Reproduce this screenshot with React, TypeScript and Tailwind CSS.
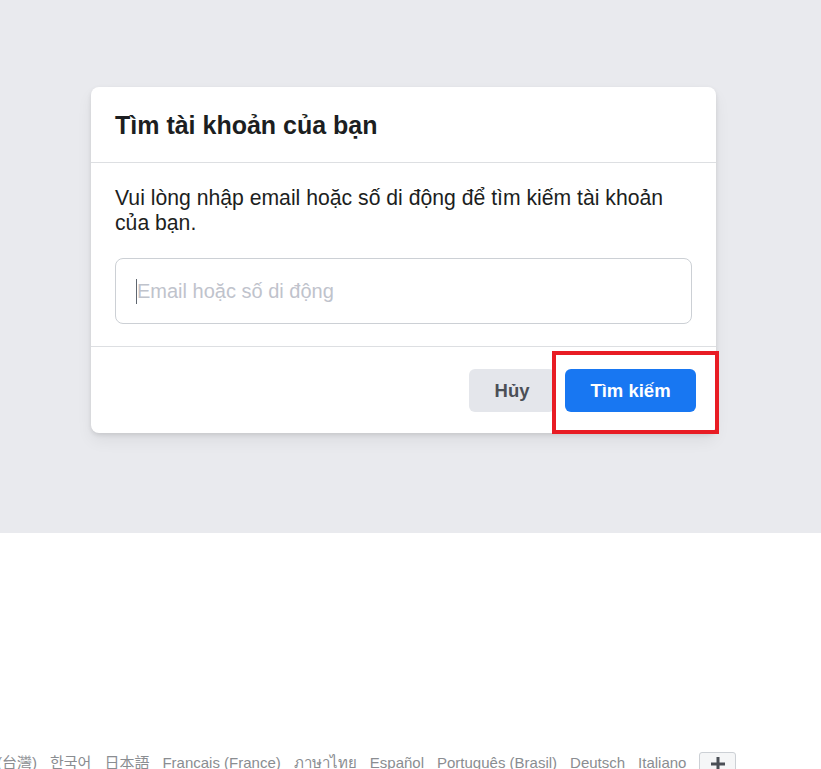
import React from "react";

const langs = [
  "中文(台灣)",
  "한국어",
  "日本語",
  "Francais (France)",
  "ภาษาไทย",
  "Español",
  "Português (Brasil)",
  "Deutsch",
  "Italiano",
];

export default function App() {
  return (
    <div
      className="w-full h-[769px] bg-white overflow-hidden"
      style={{ fontFamily: '"Liberation Sans", Arial, "Noto Sans CJK SC", "Noto Sans", sans-serif' }}
    >
      <div className="h-[533px] bg-[#e9eaee] pt-[87px] pl-[91px]">
        <div className="relative w-[625px] bg-white rounded-[8px] shadow-[0_2px_4px_rgba(0,0,0,0.1),0_8px_16px_rgba(0,0,0,0.06)]">
          <div className="h-[76px] flex items-center px-[24px] border-b border-[#dddfe2]">
            <h2 className="text-[25px] leading-[30px] font-bold text-[#1c1e21]">Tìm tài khoản của bạn</h2>
          </div>
          <div className="px-[24px] pt-[22px] pb-[22px] border-b border-[#dddfe2]">
            <p className="text-[21.2px] leading-[25px] text-[#1c1e21]">
              Vui lòng nhập email hoặc số di động để tìm kiếm tài khoản của bạn.
            </p>
            <div className="relative mt-[23px] h-[66px] rounded-[8px] border border-[#ccd0d5] flex items-center pl-[21px]">
              <span className="absolute left-[20px] top-[20px] w-px h-[25px] bg-[#606770]" />
              <span className="text-[20px] text-[#bfc3cc]">Email hoặc số di động</span>
            </div>
          </div>
          <div className="flex justify-end gap-[10px] pt-[22px] pb-[21px] pr-[20px]">
            <button className="w-[86px] h-[43px] rounded-[6px] bg-[#e4e6eb] text-[#4b4f56] text-[18.5px] font-bold">
              Hủy
            </button>
            <button className="w-[131px] h-[43px] rounded-[6px] bg-[#1877f2] text-white text-[18.5px] font-bold">
              Tìm kiếm
            </button>
          </div>
          <div className="absolute left-[461px] top-[264px] w-[167px] h-[83px] border-[4px] border-[#e81c24]" />
        </div>
      </div>
      <div className="pt-[219px]">
        <div className="flex items-start gap-[13px] ml-[-33px] whitespace-nowrap">
          {langs.map((l) => (
            <span key={l} className="mt-[1px] text-[15px] leading-[20px] text-[#8a8d91]">
              {l}
            </span>
          ))}
          <span className="w-[37px] h-[26px] border border-[#ccd0d5] bg-[#f5f6f7] rounded-[3px] flex justify-center pt-[4px]">
            <svg width="14" height="14" viewBox="0 0 14 14">
              <rect x="5.5" y="0" width="3" height="14" fill="#4b4f56" />
              <rect x="0" y="5.5" width="14" height="3" fill="#4b4f56" />
            </svg>
          </span>
        </div>
      </div>
    </div>
  );
}
